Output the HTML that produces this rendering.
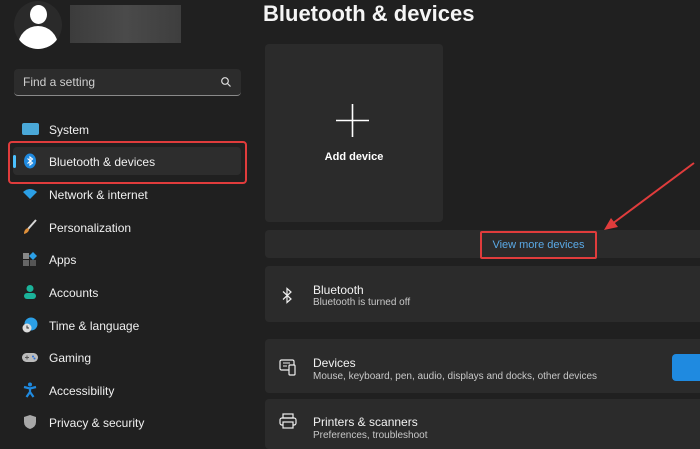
<!DOCTYPE html>
<html><head><style>
*{margin:0;padding:0;box-sizing:border-box}
body{width:700px;height:445px;background:#202020;font-family:"Liberation Sans",sans-serif;color:#fff;position:relative;overflow:hidden}
.a{position:absolute}
.nav{position:absolute;left:49px;font-size:12px;color:#f0f0f0;transform:translateY(-50%)}
.ic{position:absolute;left:22px;width:16px;height:16px;transform:translateY(-50%)}
.card{position:absolute;left:265px;right:0;background:#2b2b2b;border-radius:4px 0 0 4px}
.t{position:absolute;left:313px;font-size:12px;color:#f2f2f2}
.s{position:absolute;left:313px;font-size:10px;color:#c8c8c8}
</style></head><body>
<div class="a" style="left:14px;top:1px;width:48px;height:48px;border-radius:50%;background:#2a2a2a;overflow:hidden">
<div class="a" style="left:16px;top:4px;width:17px;height:19px;border-radius:50%;background:#fff"></div>
<div class="a" style="left:4px;top:25px;width:40px;height:26px;border-radius:20px 20px 6px 6px;background:#fff"></div>
</div>
<div class="a" style="left:70px;top:5px;width:111px;height:38px;background:linear-gradient(90deg,#3c3c3c,#4a4a4a,#3e3e3e)"></div>
<div class="a" style="left:14px;top:69px;width:227px;height:27px;background:#2c2c2c;border-radius:4px;border-bottom:1px solid #8a8a8a"></div>
<div class="a" style="left:23px;top:75px;font-size:12px;color:#cfcfcf">Find a setting</div>
<svg class="a" style="left:220px;top:76px" width="12" height="12" viewBox="0 0 12 12"><circle cx="5" cy="5" r="3.3" fill="none" stroke="#ddd" stroke-width="1.2"/><path d="M7.5 7.5L10.5 10.5" stroke="#ddd" stroke-width="1.2"/></svg>

<div class="a" style="left:13px;top:147px;width:228px;height:28px;background:#2d2d2d;border-radius:4px"></div>
<div class="a" style="left:13px;top:155px;width:3px;height:13px;background:#4cc2ff;border-radius:2px"></div>
<div class="a" style="left:8px;top:141px;width:239px;height:43px;border:2px solid #e03c3c;border-radius:4px"></div>

<div class="ic" style="top:129px;background:#4aa8d8;height:12px;width:17px;border-radius:2px"></div>
<svg class="ic" style="top:161px" viewBox="0 0 16 16"><ellipse cx="8" cy="8" rx="6" ry="7.5" fill="#1f8ae0"/><path d="M5.5 5.5L10.5 10L8 12V4L10.5 6L5.5 10.5" fill="none" stroke="#fff" stroke-width="1.1"/></svg>
<svg class="ic" style="top:194px" viewBox="0 0 16 16"><path d="M1 6Q8 0 15 6L8 13Z" fill="#2b9fe6"/></svg>
<svg class="ic" style="top:227px" viewBox="0 0 16 16"><path d="M14 1L6 10" stroke="#d8d8d8" stroke-width="2"/><path d="M6 9Q2 10 2 15Q6 14 7 11Z" fill="#e0903a"/></svg>
<svg class="ic" style="top:259px" viewBox="0 0 16 16"><rect x="1" y="2" width="6" height="6" fill="#888"/><rect x="1" y="9" width="6" height="6" fill="#666"/><rect x="8" y="9" width="6" height="6" fill="#555"/><path d="M11 1L15 5L11 9L7 5Z" fill="#2b9fe6"/></svg>
<svg class="ic" style="top:292px" viewBox="0 0 16 16"><circle cx="8" cy="4.5" r="3.5" fill="#1bb39a"/><rect x="2" y="9" width="12" height="6" rx="3" fill="#1bb39a"/></svg>
<svg class="ic" style="top:325px" viewBox="0 0 16 16"><circle cx="9" cy="7" r="6.5" fill="#2b9fe6"/><circle cx="5" cy="11" r="4.5" fill="#ddd"/><path d="M5 8.5V11H7" stroke="#333" fill="none"/></svg>
<svg class="ic" style="top:357px" viewBox="0 0 16 16"><rect x="0" y="4" width="16" height="9" rx="4.5" fill="#bbb"/><path d="M3 8.5H7M5 6.5V10.5" stroke="#555"/><circle cx="11" cy="7.5" r="1" fill="#2b6fd6"/><circle cx="12.5" cy="9.5" r="1" fill="#2b6fd6"/></svg>
<svg class="ic" style="top:390px" viewBox="0 0 16 16"><circle cx="8" cy="2.5" r="2" fill="#1f8ae0"/><path d="M2 5L8 6.5L14 5M8 6.5V10L4.5 15M8 10L11.5 15" stroke="#1f8ae0" stroke-width="2.2" fill="none"/></svg>
<svg class="ic" style="top:422px" viewBox="0 0 16 16"><path d="M8 1L14 3V8Q14 13 8 15Q2 13 2 8V3Z" fill="#a8a8a8"/></svg>

<div class="nav" style="top:130px">System</div>
<div class="nav" style="top:162px">Bluetooth &amp; devices</div>
<div class="nav" style="top:195px">Network &amp; internet</div>
<div class="nav" style="top:228px">Personalization</div>
<div class="nav" style="top:260px">Apps</div>
<div class="nav" style="top:293px">Accounts</div>
<div class="nav" style="top:326px">Time &amp; language</div>
<div class="nav" style="top:358px">Gaming</div>
<div class="nav" style="top:391px">Accessibility</div>
<div class="nav" style="top:423px">Privacy &amp; security</div>

<div class="a" style="left:263px;top:1px;font-size:22px;font-weight:bold;color:#f5f5f5">Bluetooth &amp; devices</div>
<div class="a" style="left:265px;top:44px;width:178px;height:178px;background:#2b2b2b;border-radius:4px"></div>
<svg class="a" style="left:336px;top:104px" width="33" height="33"><path d="M16.5 0V33M0 16.5H33" stroke="#fff" stroke-width="1.6"/></svg>
<div class="a" style="left:265px;top:151px;width:178px;text-align:center;font-size:11px;font-weight:bold">Add device</div>

<div class="card" style="top:230px;height:28px"></div>
<div class="a" style="left:480px;top:231px;width:117px;height:28px;border:2px solid #e03c3c;border-radius:2px"></div>
<div class="a" style="left:480px;top:239px;width:117px;text-align:center;font-size:11px;color:#5aa9e6">View more devices</div>
<svg class="a" style="left:0;top:0" width="700" height="445"><path d="M694 163L612 224" stroke="#e03c3c" stroke-width="2"/><path d="M604 230L611 218L618 227Z" fill="#e03c3c"/></svg>

<div class="card" style="top:266px;height:56px"></div>
<svg class="a" style="left:281px;top:287px" width="12" height="17" viewBox="0 0 12 17"><path d="M2 4.5L10 12L6 15.5V1.5L10 5L2 12.5" fill="none" stroke="#eee" stroke-width="1.2"/></svg>
<div class="t" style="top:283px">Bluetooth</div>
<div class="s" style="top:297px">Bluetooth is turned off</div>

<div class="card" style="top:339px;height:54px"></div>
<svg class="a" style="left:279px;top:359px" width="18" height="17" viewBox="0 0 18 17"><rect x="1" y="1" width="14" height="10" rx="1.5" fill="none" stroke="#eee" stroke-width="1.2"/><rect x="10" y="6" width="6" height="10" rx="1" fill="#2b2b2b" stroke="#eee" stroke-width="1.2"/><path d="M4 4H11M4 7H8" stroke="#eee"/></svg>
<div class="t" style="top:356px">Devices</div>
<div class="s" style="top:371px">Mouse, keyboard, pen, audio, displays and docks, other devices</div>
<div class="a" style="left:672px;top:354px;width:40px;height:27px;background:#1f8ae0;border-radius:4px"></div>

<div class="card" style="top:399px;height:50px"></div>
<svg class="a" style="left:279px;top:413px" width="18" height="16" viewBox="0 0 18 16"><rect x="4" y="1" width="10" height="4" fill="none" stroke="#eee" stroke-width="1.2"/><rect x="1" y="5" width="16" height="7" rx="2" fill="none" stroke="#eee" stroke-width="1.2"/><rect x="4" y="9" width="10" height="6" fill="#2b2b2b" stroke="#eee" stroke-width="1.2"/></svg>
<div class="t" style="top:415px">Printers &amp; scanners</div>
<div class="s" style="top:430px">Preferences, troubleshoot</div>
</body></html>
